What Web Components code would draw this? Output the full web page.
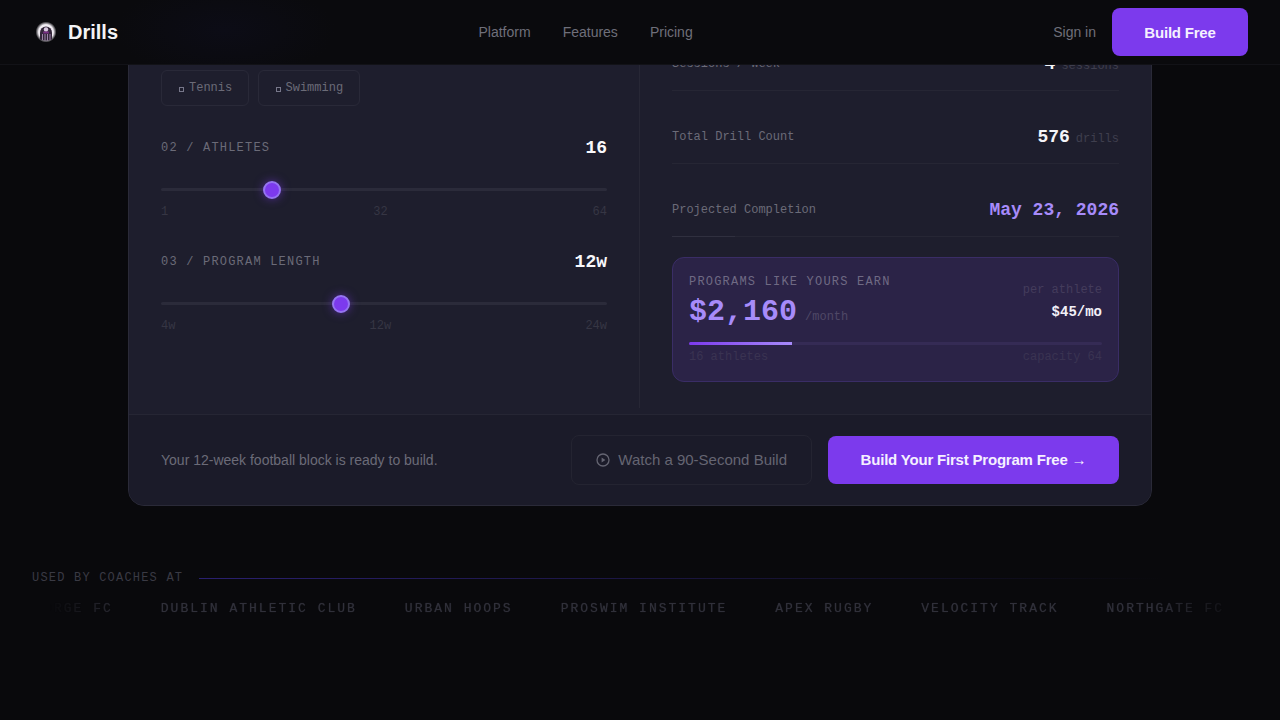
<!DOCTYPE html>
<html><head><meta charset="utf-8">
<style>
html,body{margin:0;height:100%;background:#09090c;overflow:hidden}
body{font-family:"Liberation Sans",sans-serif;color:#fff;position:relative;width:1280px;height:720px}
</style></head><body>
<template id="t-nav"><style>
:host{position:absolute;left:0;top:0;height:64px;display:flex;align-items:center;justify-content:space-between;padding:0 32px 0 34px;width:1214px;background:radial-gradient(ellipse 110px 50px at 225px 30px,#0c0c16,rgba(12,12,22,0)),#0a0a0d;border-bottom:1px solid #121217;z-index:5}
.brand{display:flex;align-items:center;gap:10px;font-weight:700;font-size:20px;color:#f4f4f6}
svg{display:block}
.links{position:absolute;left:478.5px;top:0;height:64px;display:flex;align-items:center;gap:32px;font-size:14px;color:#6f6f7a}
.right{display:flex;align-items:center;gap:16px;font-size:14px;color:#6f6f7a}
.cta{width:136px;height:48px;border-radius:8px;background:#7c3aed;color:#f5f0ff;font-weight:700;font-size:15px;letter-spacing:-.2px;display:flex;align-items:center;justify-content:center}
</style>
<div class="brand"><svg width="24" height="24" viewBox="0 0 24 24"><defs><radialGradient id="g"><stop offset="70%" stop-color="#f2eef4"/><stop offset="100%" stop-color="#f2eef4" stop-opacity="0"/></radialGradient></defs><circle cx="12" cy="12" r="10.5" fill="url(#g)"/><path d="M6 19.5V12.5a6 6 0 0 1 12 0v7q-6 2-12 0z" fill="#33263a"/><circle cx="12" cy="9.5" r="2.2" fill="#d8c8e0"/><path d="M9.2 11.5h5.6v2H9.2z" fill="#7a2f86"/><path d="M8.5 14v6M11 14v6.5M13.5 14v6.5M16 14v6" stroke="#a88db5" stroke-width=".9"/></svg>Drills</div>
<div class="links"><span>Platform</span><span>Features</span><span>Pricing</span></div>
<div class="right"><span>Sign in</span><span class="cta">Build Free</span></div>
</template>

<template id="t-chip"><style>
:host{display:inline-flex;align-items:center;gap:5px;box-sizing:border-box;height:36px;padding:0 15.5px 1px 17px;border:1px solid #292938;border-radius:6px;font:12px "Liberation Mono",monospace;color:#6b6b78}
i{width:3px;height:3px;border:1px solid #77778a;display:block;margin-top:3px}
</style><i></i><slot></slot></template>

<template id="t-slider"><style>
:host{display:block;font-family:"Liberation Mono",monospace}
.head{display:flex;justify-content:space-between;align-items:center;height:24px}
.lab{font-size:12px;letter-spacing:1.2px;color:#6b6b78}
.val{font-size:18px;font-weight:700;color:#f8f8fb}
.track{position:relative;height:3px;border-radius:2px;background:#2b2b3a;margin-top:28px}
.thumb{position:absolute;top:-7.5px;width:18px;height:18px;box-sizing:border-box;border-radius:50%;background:#7c3aed;border:2px solid #9575f0;box-shadow:0 0 10px rgba(124,58,237,.55);transform:translateX(-50%)}
.ticks{display:flex;justify-content:space-between;font-size:12px;color:#363644;margin-top:14px;line-height:14px}
</style>
<div class="head"><span class="lab"><slot name="label"></slot></span><span class="val"><slot name="value"></slot></span></div>
<div class="track"><div class="thumb"></div></div>
<div class="ticks"><slot name="ticks"></slot></div>
</template>

<template id="t-row"><style>
:host{position:relative;display:flex;justify-content:space-between;align-items:center;box-sizing:border-box;height:73px;padding-top:20px;border-bottom:1px solid #262634;font-family:"Liberation Mono",monospace;font-size:12px;color:#6b6b78}
:host([mark])::after{content:"";position:absolute;left:0;bottom:-1px;width:63px;height:1px;background:#30303f}
.v{display:flex;align-items:baseline}
.n{font-size:18px;font-weight:700;color:#f4f4f8}
.u{color:#3f3f4e}
slot[name=unit]::slotted(*){margin-left:6px}
</style><span><slot name="label"></slot></span><span class="v"><span class="n"><slot name="num"></slot></span><span class="u"><slot name="unit"></slot></span></span></template>

<template id="t-earn"><style>
:host{display:block;box-sizing:border-box;height:125px;border:1px solid #3a2d66;border-radius:12px;background:#2b2347;padding:17px 16px 0;font-family:"Liberation Mono",monospace}
.top{display:flex;justify-content:space-between}
.lab{font-size:12px;letter-spacing:1.2px;color:#6f6a84;line-height:15px}
.big{display:flex;align-items:baseline;gap:8px;margin-top:4px;line-height:36px}
.amt{font-size:30px;font-weight:700;color:#a78bfa}
.mo{font-size:12px;color:#4f4866}
.side{text-align:right;padding-top:8px}
.pa{font-size:12px;color:#443c5c;line-height:15px}
.rate{font-size:14px;font-weight:700;color:#f2f0f8;margin-top:6px}
.bar{height:3px;border-radius:2px;background:#352b55;margin-top:7px;overflow:hidden}
.fill{height:100%;width:25%;background:linear-gradient(90deg,#7c3aed,#a78bfa)}
.foot{display:flex;justify-content:space-between;font-size:12px;color:#3a3352;margin-top:5px}
</style>
<div class="top"><div><div class="lab">PROGRAMS LIKE YOURS EARN</div><div class="big"><span class="amt">$2,160</span><span class="mo">/month</span></div></div>
<div class="side"><div class="pa">per athlete</div><div class="rate">$45/mo</div></div></div>
<div class="bar"><div class="fill"></div></div>
<div class="foot"><span>16 athletes</span><span>capacity 64</span></div>
</template>

<template id="t-card"><style>
:host{position:relative;display:block;width:1024px;box-sizing:border-box;margin:-40px auto 0;height:546px;background:#1e1e2d;border:1px solid #2a2a38;border-radius:16px;overflow:hidden}
.cols{display:grid;grid-template-columns:511px 511px;height:453px;box-sizing:border-box}
.left{padding:109px 32px 0;box-sizing:border-box;border-right:1px solid #272735;margin-bottom:6px}
.right{padding:57px 32px 0}
.chips{display:flex;gap:8.8px;margin-bottom:30px}
slot[name=sl]::slotted(*){margin-bottom:31px}
.sp{height:20px}
.foot{box-sizing:border-box;height:91px;border-top:1px solid #262634;background:#1b1b29;display:flex;align-items:center;justify-content:space-between;padding:0 32px;font-size:14px;color:#6b6b78}
.acts{display:flex;gap:16px;align-items:center}
.ghost{display:flex;align-items:center;gap:8px;height:50px;box-sizing:border-box;padding:0 24px 2px;border:1px solid #242431;border-radius:8px;font-size:15px;color:#656572}
.pri{display:flex;align-items:center;justify-content:center;box-sizing:border-box;padding-bottom:2px;width:291px;height:48px;background:#7c3aed;border-radius:8px;font-size:15px;font-weight:700;letter-spacing:-.2px;color:#f5f0ff}
svg{display:block;margin-top:2px}
</style>
<div class="cols"><div class="left"><div class="chips"><slot name="chips"></slot></div><slot name="sl"></slot></div>
<div class="right"><slot name="rows"></slot><div class="sp"></div><slot name="earn"></slot></div></div>
<div class="foot"><span>Your 12-week football block is ready to build.</span><div class="acts"><div class="ghost"><svg width="14" height="14" viewBox="0 0 14 14" fill="none"><circle cx="7" cy="7" r="6" stroke="#656572" stroke-width="1.3"/><path d="M5.6 4.6 9.4 7 5.6 9.4z" fill="#656572"/></svg>Watch a 90-Second Build</div><div class="pri">Build Your First Program Free&nbsp;→</div></div></div>
</template>

<template id="t-logos"><style>
:host{display:block;margin-top:65px;padding:0 32px;font-family:"Liberation Mono",monospace}
.h{display:flex;align-items:center;gap:16px;font-size:12px;letter-spacing:1.2px;color:#3a3a44}
.l{flex:1;height:1px;background:linear-gradient(90deg,#2a2070,rgba(40,30,100,0) 92%)}
.m{overflow:hidden;margin-top:16px;-webkit-mask-image:linear-gradient(90deg,transparent 1.5%,#000 8%,#000 92%,transparent 100%);mask-image:linear-gradient(90deg,transparent 1.5%,#000 8%,#000 92%,transparent 100%)}
.t{display:flex;gap:48px;margin-left:2.4px;width:max-content;font-size:13px;letter-spacing:2px;color:#30303a;text-shadow:0 0 1px #2a2a32}
</style>
<div class="h"><span>USED BY COACHES AT</span><div class="l"></div></div>
<div class="m"><div class="t"><slot></slot></div></div>
</template>

<script>
function def(name,tid){customElements.define(name,class extends HTMLElement{constructor(){super();this.attachShadow({mode:'open'}).appendChild(document.getElementById(tid).content.cloneNode(true));}
connectedCallback(){const p=this.getAttribute('pos');if(p)this.shadowRoot.querySelector('.thumb').style.left=p;}});}
def('d-nav','t-nav');def('d-chip','t-chip');def('d-slider','t-slider');def('d-row','t-row');def('d-earn','t-earn');def('d-card','t-card');def('d-logos','t-logos');
</script>

<d-nav></d-nav>
<d-card>
<d-chip slot="chips">Tennis</d-chip><d-chip slot="chips">Swimming</d-chip>
<d-slider slot="sl" pos="111px"><span slot="label">02 / ATHLETES</span><span slot="value">16</span><span slot="ticks">1</span><span slot="ticks">32</span><span slot="ticks">64</span></d-slider>
<d-slider slot="sl" pos="180px"><span slot="label">03 / PROGRAM LENGTH</span><span slot="value">12w</span><span slot="ticks">4w</span><span slot="ticks">12w</span><span slot="ticks">24w</span></d-slider>
<d-row slot="rows"><span slot="label">Sessions / Week</span><span slot="num">4</span><span slot="unit">sessions</span></d-row>
<d-row slot="rows"><span slot="label">Total Drill Count</span><span slot="num">576</span><span slot="unit">drills</span></d-row>
<d-row slot="rows" mark><span slot="label">Projected Completion</span><span slot="num" style="color:#a78bfa">May 23, 2026</span></d-row>
<d-earn slot="earn"></d-earn>
</d-card>
<d-logos><span>FORGE FC</span><span>DUBLIN ATHLETIC CLUB</span><span>URBAN HOOPS</span><span>PROSWIM INSTITUTE</span><span>APEX RUGBY</span><span>VELOCITY TRACK</span><span>NORTHGATE FC</span></d-logos>
</body></html>
